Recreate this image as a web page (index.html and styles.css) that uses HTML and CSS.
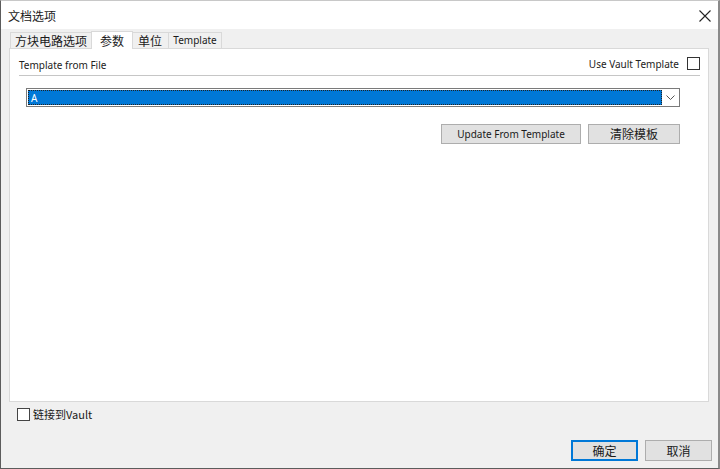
FILE: index.html
```html
<!DOCTYPE html>
<html lang="zh-CN">
<head>
    <meta charset="UTF-8">
    <title>文档选项</title>
    <link rel="stylesheet" href="styles.css">
</head>
<body>
    <div class="window">
        <div class="titlebar">
            <span class="title">文档选项</span>
            <span class="close">
                <svg width="12" height="12" viewBox="0 0 12 12"><path d="M0.5 0.5 L11.5 11.5 M11.5 0.5 L0.5 11.5" stroke="#222" stroke-width="1.1" fill="none"/></svg>
            </span>
        </div>
        <div class="client">
            <div class="tabs">
                <div class="tab">方块电路选项</div>
                <div class="tab active">参数</div>
                <div class="tab units">单位</div>
                <div class="tab latin">Template</div>
            </div>
            <div class="panel">
                <div class="panel-head">
                    <span class="label">Template from File</span>
                    <span class="vault">
                        <span class="label">Use Vault Template</span>
                        <span class="check"></span>
                    </span>
                </div>
                <div class="combo">
                    <div class="combo-sel"><span>A</span></div>
                    <div class="combo-arrow">
                        <svg width="9" height="5" viewBox="0 0 9 5"><path d="M0.5 0.5 L4.5 4.5 L8.5 0.5" stroke="#555" stroke-width="1" fill="none"/></svg>
                    </div>
                </div>
                <div class="actions">
                    <button class="btn wide">Update From Template</button>
                    <button class="btn cjk">清除模板</button>
                </div>
            </div>
            <div class="footer">
                <label class="link"><span class="check"></span>链接到Vault</label>
                <div class="dialog-buttons">
                    <button class="btn cjk ok">确定</button>
                    <button class="btn cjk">取消</button>
                </div>
            </div>
        </div>
    </div>
</body>
</html>
```

FILE: styles.css
```css
/* dialog styles */
body {
    margin: 0;
    background-color: #fff;
    font-family: "Noto Sans CJK SC", "Noto Sans", sans-serif;
    color: #1a1a1a;
}

.window {
    width: 720px;
    height: 469px;
    border-left: 1px solid #5c5c5c;
    border-right: 2px solid #8a8a8a;
    border-bottom: 1px solid #5c5c5c;
    border-top: 1px solid #c8c8c8;
    box-sizing: border-box;
    display: flex;
    flex-direction: column;
}

.titlebar {
    height: 28px;
    background-color: #fff;
    display: flex;
    align-items: center;
    justify-content: space-between;
    padding: 0 7px 0 7px;
}

.title {
    font-size: 12px;
}

.close {
    display: flex;
    margin-top: 1px;
}

.client {
    flex: 1;
    background-color: #f0f0f0;
    display: flex;
    flex-direction: column;
}

.tabs {
    display: flex;
    align-items: flex-end;
    height: 18px;
    margin-top: 1px;
    padding-left: 9px;
}

.tab {
    height: 15px;
    padding: 0 4px;
    font-size: 12px;
    line-height: 15px;
    border: 1px solid #d9d9d9;
    border-bottom: none;
    background-color: #f0f0f0;
    margin-right: -1px;
}

.tab.units {
    padding: 0 6px 0 5px;
}

.tab.active {
    height: 17px;
    line-height: 17px;
    padding: 0 8px;
    background-color: #fff;
    position: relative;
    z-index: 1;
    margin-bottom: -1px;
}

.tab.latin {
    font-family: "Noto Sans", sans-serif;
    font-size: 10px;
    padding: 0 4px;
    width: 44px;
    text-align: center;
}

.panel {
    height: 354px;
    margin: 0 9px 0 8px;
    background-color: #fff;
    border: 1px solid #d9d9d9;
    box-sizing: border-box;
    padding: 0 8px 0 9px;
}

.panel-head {
    display: flex;
    justify-content: space-between;
    align-items: center;
    height: 27px;
    padding-top: 5px;
    box-sizing: border-box;
    border-bottom: 1px solid #c6c6c6;
}

.label {
    font-family: "Noto Sans", sans-serif;
    font-size: 10px;
    color: #222;
}

.vault {
    display: flex;
    align-items: center;
    gap: 8px;
    margin-top: -2px;
}

.check {
    display: inline-block;
    width: 11px;
    height: 11px;
    border: 1px solid #333;
    background-color: #fff;
}

.combo {
    display: flex;
    height: 19px;
    margin: 12px 20px 0 7px;
    border: 1px solid #7a7a7a;
    box-sizing: border-box;
    background-color: #fff;
    padding: 1px;
}

.combo-sel {
    flex: 1;
    background-color: #0078d7;
    outline: 1px dotted #222;
    outline-offset: -1px;
    display: flex;
    align-items: center;
    padding-left: 3px;
    color: #fff;
    font-family: "Noto Sans", sans-serif;
    font-size: 10px;
}

.combo-arrow {
    width: 16px;
    display: flex;
    align-items: center;
    justify-content: center;
}

.actions {
    display: flex;
    justify-content: flex-end;
    gap: 7px;
    margin: 17px 20px 0 0;
}

.btn {
    height: 20px;
    padding: 0;
    background-color: #e1e1e1;
    border: 1px solid #adadad;
    color: #1a1a1a;
    font-family: "Noto Sans", sans-serif;
    font-size: 10px;
    line-height: 18px;
    box-sizing: border-box;
}

.btn.wide {
    width: 140px;
}

.btn.cjk {
    width: 92px;
    font-family: "Noto Sans CJK SC", sans-serif;
    font-size: 12px;
}

.footer {
    flex: 1;
    display: flex;
    flex-direction: column;
    justify-content: space-between;
    padding: 4px 6px 7px 16px;
}

.link {
    display: flex;
    align-items: center;
    gap: 3px;
    font-size: 11px;
}

.link .check {
    border-color: #444;
}

.dialog-buttons {
    display: flex;
    justify-content: flex-end;
    gap: 7px;
}

.dialog-buttons .btn {
    width: 67px;
    height: 21px;
}

.btn.ok {
    border-color: #0078d7;
    box-shadow: inset 0 0 0 1px #0078d7;
}
```
